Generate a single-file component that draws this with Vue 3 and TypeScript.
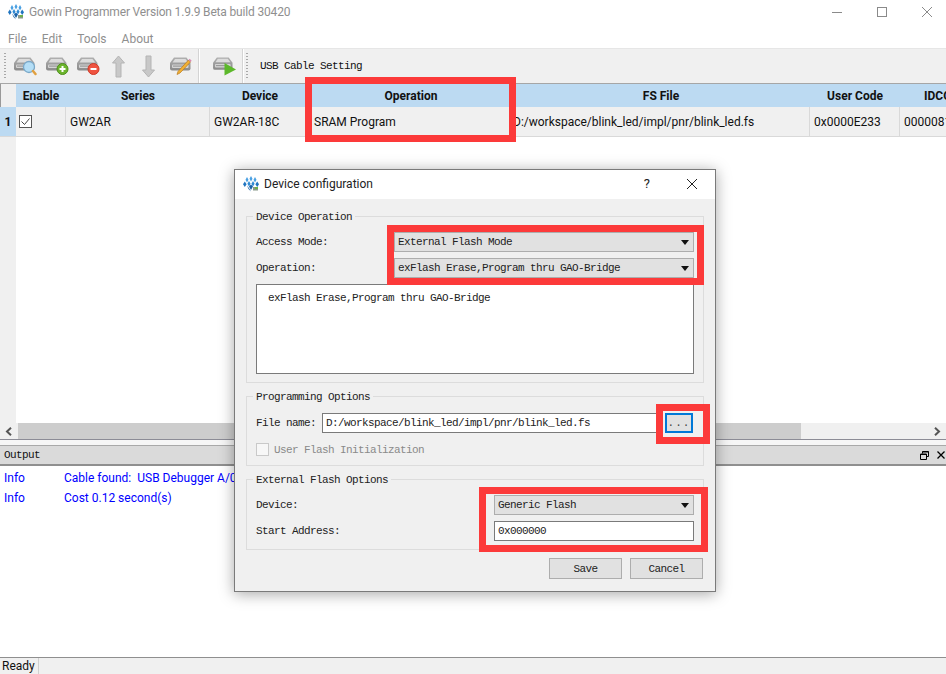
<script setup lang="ts">
const menus: string[] = ['File', 'Edit', 'Tools', 'About']
const columns = [
  { title: 'Enable', value: '' },
  { title: 'Series', value: 'GW2AR' },
  { title: 'Device', value: 'GW2AR-18C' },
  { title: 'Operation', value: 'SRAM Program' },
  { title: 'FS File', value: 'D:/workspace/blink_led/impl/pnr/blink_led.fs' },
  { title: 'User Code', value: '0x0000E233' },
  { title: 'IDCODE', value: '0000081B' },
]
const filePath = 'D:/workspace/blink_led/impl/pnr/blink_led.fs'
</script>

<template>
  <div class="window">
    <svg class="defs" width="0" height="0" aria-hidden="true">
      <defs>
        <linearGradient id="driveBody" x1="0" y1="0" x2="0" y2="1">
          <stop offset="0" stop-color="#b0b0b0" />
          <stop offset="1" stop-color="#8a8a8a" />
        </linearGradient>
        <symbol id="drive" viewBox="0 0 24 20">
          <path d="M5 1.500h12.500l4 5.500v5.500a2 2 0 0 1-2 2H3a2 2 0 0 1-2-2V7z" fill="url(#driveBody)" />
          <path d="M6 3h10.500l2.800 3.500H3.500z" fill="#dcdcdc" />
          <rect x="3" y="8.500" width="16.500" height="3.500" rx="1" fill="#d4d4d4" />
          <rect x="4" y="9.500" width="11" height="1.200" fill="#9a9a9a" />
        </symbol>
        <symbol id="logo" viewBox="0 0 16 16">
          <path d="M4 1l1.500 2.800L4 6.600 2.500 3.800z" fill="#4aa0e2" />
          <path d="M8 0l1.500 2.800L8 5.600 6.500 2.800z" fill="#4aa0e2" />
          <path d="M12 1l1.500 2.800L12 6.600l-1.500-2.800z" fill="#4aa0e2" />
          <path d="M1.800 5.500l1.800 2.800-1.800 2.800L0 8.300z" fill="#1f74c0" />
          <path d="M6 5l1.600 2.700L6 10.400 4.400 7.700z" fill="#2f8ad4" />
          <path d="M10 5l1.600 2.700L10 10.400 8.400 7.700z" fill="#2f8ad4" />
          <path d="M14.200 5.500L16 8.300l-1.800 2.800-1.800-2.800z" fill="#1f74c0" />
          <path d="M4 9.500l2.400 3.300L8 15.500 5.500 13z" fill="#1a62a8" />
          <path d="M6 10.500L8 14l2-3.500L8 8.500z" fill="#1a62a8" />
          <rect x="10" y="11" width="5" height="3.500" fill="#8a9a8a" />
          <rect x="12" y="11" width="3" height="2" fill="#6fb04a" />
        </symbol>
      </defs>
    </svg>

    <header class="titlebar">
      <svg class="logo"><use href="#logo" /></svg>
      <span class="title">Gowin Programmer Version 1.9.9 Beta build 30420</span>
      <div class="controls">
        <svg viewBox="0 0 45 24" width="45" height="24"><path d="M18 12.500h10" stroke="#8a8a8a" fill="none" /></svg>
        <svg viewBox="0 0 45 24" width="45" height="24"><rect x="18.500" y="7.500" width="9" height="9" stroke="#8a8a8a" fill="none" /></svg>
        <svg viewBox="0 0 45 24" width="45" height="24"><path d="M18 7l10 10M28 7L18 17" stroke="#8a8a8a" fill="none" /></svg>
      </div>
    </header>

    <nav class="menubar">
      <span v-for="m in menus" :key="m" class="menu">{{ m }}</span>
    </nav>

    <div class="toolbar">
      <span class="grip"></span>
      <svg class="tool" width="24" height="20" viewBox="0 0 24 20">
        <use href="#drive" />
        <circle cx="16" cy="11" r="5.500" fill="#b4def6" stroke="#7aa8c8" stroke-width="1.300" />
        <path d="M20 15l2.500 3" stroke="#e0a040" stroke-width="2.500" stroke-linecap="round" />
      </svg>
      <svg class="tool add" width="24" height="20" viewBox="0 0 24 20">
        <use href="#drive" />
        <circle cx="17.500" cy="13" r="5.500" fill="#6cb52d" stroke="#4d8f1c" />
        <path d="M14.500 13h6M17.500 10v6" stroke="#fff" stroke-width="2" />
      </svg>
      <svg class="tool remove" width="24" height="20" viewBox="0 0 24 20">
        <use href="#drive" />
        <circle cx="17.500" cy="13" r="5.500" fill="#ef5340" stroke="#cf3a28" />
        <path d="M14.500 13h6" stroke="#fff" stroke-width="2" />
      </svg>
      <svg class="arrow up" width="15" height="23" viewBox="0 0 15 23">
        <path d="M7.500 1L13.500 8H10v14H5V8H1.500z" fill="#c8c8c8" stroke="#b4b4b4" />
      </svg>
      <svg class="arrow down" width="15" height="23" viewBox="0 0 15 23">
        <path d="M7.500 22L13.500 15H10V1H5v14H1.500z" fill="#c8c8c8" stroke="#b4b4b4" />
      </svg>
      <svg class="tool edit" width="24" height="20" viewBox="0 0 24 20">
        <use href="#drive" />
        <path d="M19.500 4l2 2L11 17l-3 1.500 1-3z" fill="#f2b134" stroke="#b9791a" stroke-width=".7" />
        <path d="M19.500 4l2 2 1.200-1.300-2-2z" fill="#d98bb0" />
      </svg>
      <span class="sep"></span>
      <svg class="tool run" width="25" height="20" viewBox="0 0 25 20">
        <use href="#drive" width="23" height="19" />
        <path d="M12.500 7l11.500 6.500-11.500 6z" fill="#5cb82a" />
      </svg>
      <span class="sep second"></span>
      <span class="grip third"></span>
      <span class="cable">USB Cable Setting</span>
    </div>

    <section class="table-area">
      <div class="thead">
        <div class="corner"></div>
        <div v-for="c in columns" :key="c.title" class="th">{{ c.title }}</div>
      </div>
      <div class="trow">
        <div class="rowhead">1</div>
        <div v-for="c in columns" :key="c.title" class="td">
          <span v-if="c.title === 'Enable'" class="check">
            <svg width="13" height="13" viewBox="0 0 13 13"><rect x=".5" y=".5" width="12" height="12" fill="#fff" stroke="#555" /><path d="M2.500 6.500l3 3 5-6" stroke="#444" fill="none" /></svg>
          </span>
          <template v-else>{{ c.value }}</template>
        </div>
      </div>
      <div class="table-rest"><div class="rowgutter"></div></div>
      <div class="hscroll">
        <span class="sb-btn">
          <svg width="8" height="9" viewBox="0 0 8 9"><path d="M6 .8L2 4.500 6 8.200" stroke="#555" stroke-width="2" fill="none" /></svg>
        </span>
        <span class="sb-thumb"></span>
        <span class="sb-btn end">
          <svg width="8" height="9" viewBox="0 0 8 9"><path d="M2 .8L6 4.500 2 8.200" stroke="#555" stroke-width="2" fill="none" /></svg>
        </span>
      </div>
    </section>

    <section class="dock">
      <div class="dock-head">
        <span class="dock-title">Output</span>
        <svg class="dock-icon" width="9" height="9" viewBox="0 0 9 9"><path d="M2.500 2.500V.5h6v5h-2M.5 3h6v5.500h-6z" fill="none" stroke="#000" /><path d="M.5 3.500h6M2.500 1h6" stroke="#000" /></svg>
        <svg class="dock-close" width="8" height="8" viewBox="0 0 8 8"><path d="M.5.5l7 7M7.500.5l-7 7" stroke="#000" stroke-width="1.300" /></svg>
      </div>
      <div class="log">
        <div class="log-line"><span class="log-kind">Info</span><span class="log-msg">Cable found:&nbsp; USB Debugger A/0</span></div>
        <div class="log-line"><span class="log-kind">Info</span><span class="log-msg">Cost 0.12 second(s)</span></div>
      </div>
    </section>

    <footer class="statusbar"><span class="ready">Ready</span></footer>

    <div class="dialog">
      <div class="dlg-title">
        <svg class="logo"><use href="#logo" /></svg>
        <span>Device configuration</span>
        <span class="help">?</span>
        <svg class="dlg-close" width="12" height="12" viewBox="0 0 12 12"><path d="M1 1l10 10M11 1L1 11" stroke="#222" fill="none" /></svg>
      </div>
      <div class="dlg-body">
        <fieldset class="group">
          <legend>Device Operation</legend>
          <div class="field op">
            <label>Access Mode:</label>
            <div class="combo">External Flash Mode<i></i></div>
          </div>
          <div class="field op">
            <label>Operation:</label>
            <div class="combo">exFlash Erase,Program thru GAO-Bridge<i></i></div>
          </div>
          <div class="desc">exFlash Erase,Program thru GAO-Bridge</div>
        </fieldset>

        <fieldset class="group prog">
          <legend>Programming Options</legend>
          <div class="file-row">
            <label>File name:</label>
            <div class="input file">{{ filePath }}</div>
            <button class="browse" type="button">...</button>
          </div>
          <div class="check-row">
            <span class="ghost-box"></span>
            <span>User Flash Initialization</span>
          </div>
        </fieldset>

        <fieldset class="group ext">
          <legend>External Flash Options</legend>
          <div class="field flash">
            <label>Device:</label>
            <div class="combo">Generic Flash<i></i></div>
          </div>
          <div class="field flash">
            <label>Start Address:</label>
            <div class="input">0x000000</div>
          </div>
        </fieldset>

        <div class="actions">
          <button type="button">Save</button>
          <button type="button">Cancel</button>
        </div>
      </div>
    </div>

    <div class="mark m-op"></div>
    <div class="mark m-combo"></div>
    <div class="mark m-browse"></div>
    <div class="mark m-flash"></div>
  </div>
</template>

<style>
html, body { margin: 0; background: #fff; }
</style>

<style scoped>
.window {
  position: relative;
  width: 946px;
  height: 674px;
  overflow: hidden;
  display: flex;
  flex-direction: column;
  background: #fff;
  font-family: Roboto, "Noto Sans", sans-serif;
  font-size: 12px;
  color: #111;
}
.defs { position: absolute; }
.titlebar {
  height: 24px;
  flex: none;
  display: flex;
  align-items: center;
  padding-left: 8px;
}
.logo { width: 16px; height: 16px; flex: none; }
.title { margin-left: 5px; color: #8f8f8f; letter-spacing: -0.17px; }
.controls { margin-left: auto; margin-right: -3px; display: flex; }
.menubar {
  height: 24px;
  box-sizing: border-box;
  padding: 6px 0 0 8px;
  flex: none;
  display: flex;
  align-items: center;
  gap: 15px;
  color: #8f8f8f;
}
.toolbar {
  height: 34px;
  flex: none;
  display: flex;
  align-items: center;
  border-top: 1px solid #e6e6e6;
  background: #f0f0f0;
}
.grip {
  width: 2px;
  height: 26px;
  margin-left: 4px;
  background: repeating-linear-gradient(#a8a8a8 0 1px, transparent 1px 3px);
}
.tool { flex: none; margin-left: 7px; }
.tool.add { margin-left: 8px; }
.tool.remove { margin-left: 7px; }
.arrow { flex: none; }
.arrow.up { margin-left: 11px; }
.arrow.down { margin-left: 15px; }
.tool.edit { margin-left: 13px; }
.sep {
  width: 1px;
  height: 34px;
  margin-left: 5px;
  background: #d4d4d4;
  box-shadow: 1px 0 #fff;
}
.tool.run { margin-left: 13px; }
.sep.second { margin-left: 5px; }
.grip.third { margin-left: 3px; }
.cable {
  margin-left: 12px;
  font-family: "Liberation Mono", monospace;
  font-size: 11px;
  letter-spacing: -0.6px;
}
.table-area {
  position: relative;
  flex: none;
  height: 355px;
  display: flex;
  flex-direction: column;
  overflow: hidden;
  border-top: 1px solid #a6a6a6;
  border-bottom: 1px solid #8c8c96;
}
.thead, .trow {
  display: grid;
  grid-template-columns: 16px 50px 144px 100px 202px 298px 90px 90px;
  flex: none;
}
.thead { height: 23px; background: #bcdaf2; }
.corner { background: #f0f0f0; border-left: 1px solid #999; }
.th {
  display: flex;
  align-items: center;
  justify-content: center;
  font-weight: 700;
  white-space: nowrap;
}
.trow { height: 30px; background: #f0f0f0; border-bottom: 1px solid #d9d9d9; box-sizing: border-box; }
.rowhead {
  display: flex;
  align-items: center;
  justify-content: center;
  background: #bcdaf2;
  font-weight: 700;
}
.td {
  display: flex;
  align-items: center;
  padding-left: 4px;
  border-right: 1px solid #d9d9d9;
  white-space: nowrap;
  overflow: hidden;
}
.td:nth-child(6) { padding-left: 1px; }
.check { display: flex; margin-left: -1px; }
.table-rest { flex: 1; min-height: 0; }
.rowgutter { width: 16px; height: 100%; background: #f0f0f0; }
.hscroll {
  height: 16px;
  flex: none;
  display: flex;
  align-items: center;
  background: #f0f0f0;
}
.sb-btn {
  width: 18px;
  flex: none;
  display: flex;
  align-items: center;
  justify-content: center;
}
.sb-btn.end { margin-left: auto; }
.sb-thumb { width: 783px; height: 16px; background: #cdcdcd; }
.dock {
  flex: 1;
  min-height: 0;
  display: flex;
  flex-direction: column;
  padding-top: 5px;
  background: #f6f6f6;
}
.dock-head {
  height: 18px;
  flex: none;
  display: flex;
  align-items: center;
  background: #dadada;
  border-top: 1px solid #a9a9a9;
  border-bottom: 2px solid #8f8f8f;
  padding: 0 1px 0 4px;
}
.dock-title { font-family: "Liberation Mono", monospace; font-size: 11px; letter-spacing: -0.6px; }
.dock-icon { margin-left: auto; }
.dock-close { margin-left: 8px; }
.log {
  flex: 1;
  background: #fff;
  padding-top: 2px;
  color: #0000ff;
}
.log-line { height: 20px; display: flex; align-items: center; padding-left: 4px; white-space: nowrap; }
.log-kind { width: 60px; flex: none; }
.log-msg { white-space: pre; }
.statusbar {
  height: 16px;
  flex: none;
  display: flex;
  align-items: center;
  border-top: 1px solid #8f8f8f;
  background: #f0f0f0;
}
.ready { padding: 0 3px 0 2px; border-right: 1px solid #d0d0d0; line-height: 16px; }

.dialog {
  position: absolute;
  left: 234px;
  top: 169px;
  width: 482px;
  height: 423px;
  box-sizing: border-box;
  border: 1px solid #7a7a7a;
  background: #f0f0f0;
  box-shadow: 0 2px 14px rgba(0, 0, 0, .35);
  display: flex;
  flex-direction: column;
}
.dlg-title {
  height: 29px;
  box-sizing: border-box;
  padding: 0 0 2px 8px;
  flex: none;
  background: #fff;
  display: flex;
  align-items: center;
  gap: 5px;
  color: #222;
}
.help { margin-left: auto; font-size: 13px; }
.dlg-close { margin: 0 17px 0 31px; }
.dlg-body {
  flex: 1;
  padding: 10px 11px 0 11px;
  display: flex;
  flex-direction: column;
  gap: 6px;
  font-family: "Liberation Mono", monospace;
  font-size: 11px;
  letter-spacing: -0.6px;
  color: #222;
}
.group {
  margin: 0;
  min-width: 0;
  padding: 9px 9px 8px;
  border: 1px solid #dcdcdc;
  display: flex;
  flex-direction: column;
  gap: 6px;
}
.group legend {
  padding: 0 3px;
  margin-left: -3px;
  height: 14px;
  line-height: 16px;
}
.field { display: grid; align-items: center; }
.field.op { grid-template-columns: 138px 300px; }
.field.flash { grid-template-columns: 238px 200px; }
.combo {
  position: relative;
  height: 20px;
  box-sizing: border-box;
  border: 1px solid #adadad;
  background: #e1e1e1;
  display: flex;
  align-items: center;
  padding-left: 3px;
  white-space: nowrap;
}
.combo i {
  position: absolute;
  right: 4px;
  top: 7px;
  border: 4px solid transparent;
  border-top: 5px solid #111;
  border-bottom: 0;
}
.desc {
  height: 90px;
  box-sizing: border-box;
  border: 1px solid #7a7a7a;
  background: #fff;
  padding: 7px 0 0 11px;
}
.input {
  height: 20px;
  box-sizing: border-box;
  border: 1px solid #7a7a7a;
  background: #fff;
  display: flex;
  align-items: center;
  padding-left: 3px;
  white-space: nowrap;
}
.prog { padding-top: 10px; padding-bottom: 9px; gap: 10px; }
.file-row { display: flex; align-items: center; }
.file-row label { width: 66px; flex: none; }
.input.file { flex: 1; }
.browse {
  width: 28px;
  height: 20px;
  flex: none;
  box-sizing: border-box;
  margin: 0 1px 0 6px;
  padding: 0;
  border: 2px solid #0078d7;
  background: #e1e1e1;
  font: inherit;
  letter-spacing: 1px;
  color: #444;
}
.check-row { display: flex; align-items: center; gap: 5px; color: #8a8a8a; }
.ghost-box { width: 13px; height: 13px; box-sizing: border-box; border: 1px solid #c9c9c9; background: #f7f7f7; }
.actions {
  display: flex;
  justify-content: flex-end;
  gap: 8px;
  margin: 2px 1px 0 0;
}
.actions button {
  width: 73px;
  height: 21px;
  box-sizing: border-box;
  padding: 0;
  border: 1px solid #adadad;
  background: #e1e1e1;
  font: inherit;
  letter-spacing: inherit;
  color: #222;
}

.mark {
  position: absolute;
  box-sizing: border-box;
  border: 7px solid #fc3a3a;
  pointer-events: none;
}
.m-op { left: 305px; top: 77px; width: 211px; height: 65px; }
.m-combo { left: 387px; top: 225px; width: 317px; height: 60px; }
.m-browse { left: 656px; top: 404px; width: 54px; height: 40px; }
.m-flash { left: 479px; top: 487px; width: 229px; height: 65px; }
</style>
